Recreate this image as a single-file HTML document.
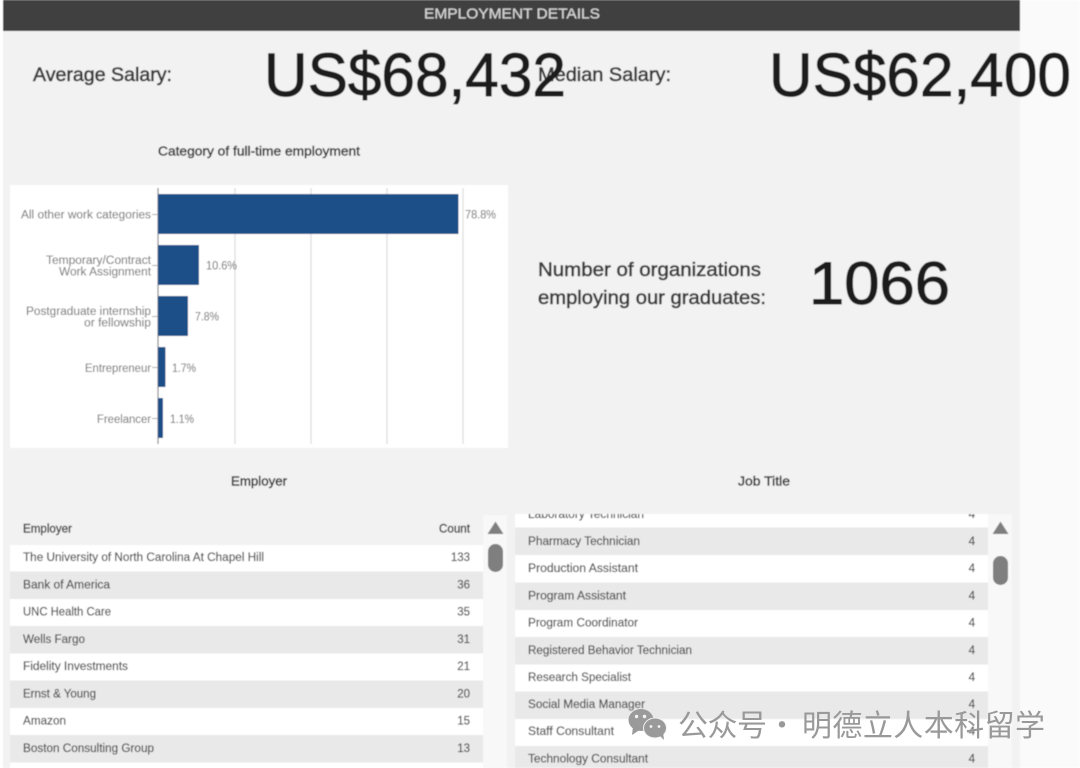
<!DOCTYPE html>
<html lang="en"><head><meta charset="utf-8"><title>Employment Details</title>
<style>
html,body{margin:0;padding:0;width:1080px;height:768px;overflow:hidden;background:#fff}
svg{display:block}
text{font-family:"Liberation Sans","Noto Sans CJK SC",sans-serif;white-space:pre}
.big{font-size:61px;fill:#1c1c1c;stroke:#1c1c1c;stroke-width:.9}
.h{font-size:19px;fill:#3c3c3c;stroke:#3c3c3c;stroke-width:.6}
.t{font-size:12.5px;fill:#3c3c3c;stroke:#3c3c3c;stroke-width:.45}
.l{font-size:11.5px;fill:#808080;stroke:#808080;stroke-width:.12}
.r{font-size:11.5px;fill:#505050;stroke:#505050;stroke-width:.2}
.c{font-size:11.5px;fill:#505050;stroke:#505050;stroke-width:.2;text-anchor:end}
.hd{font-size:11.5px;fill:#444;stroke:#444;stroke-width:.4}
.wm{font-family:"Noto Sans CJK SC","WenQuanYi Zen Hei",sans-serif;font-size:30px;fill:#999}
</style></head>
<body>
<svg width="1080" height="768" viewBox="0 0 1080 768" xmlns="http://www.w3.org/2000/svg">
<defs>
<filter id="b" x="0" y="0" width="100%" height="100%"><feGaussianBlur stdDeviation="0.6"/></filter>
<clipPath id="cl"><rect x="515" y="514" width="473" height="254"/></clipPath>
</defs>
<g filter="url(#b)">
<rect width="1080" height="768" fill="#fff"/>
<rect x="1020" y="0" width="60" height="768" fill="#fafafa"/>
<rect x="3" y="0" width="1017" height="768" fill="#f2f2f2"/>
<rect x="3" y="0" width="1017" height="31" fill="#404040"/>
<text x="424" y="18.5" font-size="15" fill="#d2d2d2" stroke="#d2d2d2" stroke-width=".25" textLength="176" lengthAdjust="spacingAndGlyphs">EMPLOYMENT DETAILS</text>

<text class="h" x="33" y="81" textLength="139" lengthAdjust="spacingAndGlyphs">Average Salary:</text>
<text class="h" x="538" y="81" textLength="133" lengthAdjust="spacingAndGlyphs">Median Salary:</text>
<text class="big" x="264" y="96" textLength="302" lengthAdjust="spacingAndGlyphs">US$68,432</text>
<text class="big" x="769" y="96" textLength="302" lengthAdjust="spacingAndGlyphs">US$62,400</text>

<text class="t" x="158" y="155.500" textLength="202" lengthAdjust="spacingAndGlyphs">Category of full-time employment</text>

<rect x="10" y="185" width="498" height="263" fill="#fff"/>
<g stroke="#e0e0e0" stroke-width="1.4">
<line x1="235" y1="188" x2="235" y2="444"/><line x1="311" y1="188" x2="311" y2="444"/><line x1="387" y1="188" x2="387" y2="444"/><line x1="463" y1="188" x2="463" y2="444"/>
</g>
<line x1="158" y1="188" x2="158" y2="444" stroke="#888" stroke-width="1.2"/>
<g stroke="#aaa"><line x1="152" y1="214.500" x2="158" y2="214.500"/><line x1="152" y1="265.500" x2="158" y2="265.500"/><line x1="152" y1="316.500" x2="158" y2="316.500"/><line x1="152" y1="367.500" x2="158" y2="367.500"/><line x1="152" y1="418.500" x2="158" y2="418.500"/></g>
<g fill="#1a4f88">
<rect x="158" y="194" width="300.500" height="40"/>
<rect x="158" y="245" width="41" height="40"/>
<rect x="158" y="296" width="30" height="40"/>
<rect x="158" y="347" width="7.500" height="40"/>
<rect x="158" y="398" width="5" height="40"/>
</g>
<text class="l" x="21" y="218.500" textLength="130" lengthAdjust="spacingAndGlyphs">All other work categories</text>
<text class="l" x="46" y="264" textLength="105" lengthAdjust="spacingAndGlyphs">Temporary/Contract</text>
<text class="l" x="59" y="275.500" textLength="92" lengthAdjust="spacingAndGlyphs">Work Assignment</text>
<text class="l" x="26" y="315" textLength="125" lengthAdjust="spacingAndGlyphs">Postgraduate internship</text>
<text class="l" x="84" y="326.500" textLength="67" lengthAdjust="spacingAndGlyphs">or fellowship</text>
<text class="l" x="85" y="372" textLength="66" lengthAdjust="spacingAndGlyphs">Entrepreneur</text>
<text class="l" x="97" y="423" textLength="54" lengthAdjust="spacingAndGlyphs">Freelancer</text>
<text class="l" x="465" y="218.500" textLength="31" lengthAdjust="spacingAndGlyphs">78.8%</text>
<text class="l" x="206" y="269.500" textLength="31" lengthAdjust="spacingAndGlyphs">10.6%</text>
<text class="l" x="195" y="320.500" textLength="24" lengthAdjust="spacingAndGlyphs">7.8%</text>
<text class="l" x="172" y="372" textLength="24" lengthAdjust="spacingAndGlyphs">1.7%</text>
<text class="l" x="170" y="423" textLength="24" lengthAdjust="spacingAndGlyphs">1.1%</text>

<text x="538" y="276" font-size="19.500" fill="#3c3c3c" stroke="#3c3c3c" stroke-width=".6" textLength="223" lengthAdjust="spacingAndGlyphs">Number of organizations</text>
<text x="538" y="304" font-size="19.500" fill="#3c3c3c" stroke="#3c3c3c" stroke-width=".6" textLength="228" lengthAdjust="spacingAndGlyphs">employing our graduates:</text>
<text x="809" y="304" font-size="60" fill="#1c1c1c" stroke="#1c1c1c" stroke-width="1" textLength="141" lengthAdjust="spacingAndGlyphs">1066</text>

<text class="t" x="231" y="485.500" textLength="56" lengthAdjust="spacingAndGlyphs">Employer</text>
<text class="t" x="738" y="485.500" textLength="52" lengthAdjust="spacingAndGlyphs">Job Title</text>

<!-- Employer table -->
<rect x="483" y="515" width="24" height="253" fill="#f8f8f8"/>
<path d="M495.500 521.500 L503.500 534 L487.500 534 Z" fill="#7f7f7f"/>
<rect x="488" y="544" width="15" height="28" rx="7.500" fill="#7f7f7f"/>
<rect x="10" y="545" width="473" height="223" fill="#fff"/>
<g fill="#e9e9e9">
<rect x="10" y="571.500" width="473" height="27.500"/>
<rect x="10" y="626" width="473" height="27.500"/>
<rect x="10" y="680.500" width="473" height="27.500"/>
<rect x="10" y="735" width="473" height="27.500"/>
</g>
<text class="hd" x="23" y="532.500" textLength="49" lengthAdjust="spacingAndGlyphs">Employer</text>
<text class="hd" x="439" y="532.500" textLength="31" lengthAdjust="spacingAndGlyphs">Count</text>
<text class="r" x="23" y="561" textLength="241" lengthAdjust="spacingAndGlyphs">The University of North Carolina At Chapel Hill</text>
<text class="r" x="23" y="588.500" textLength="87" lengthAdjust="spacingAndGlyphs">Bank of America</text>
<text class="r" x="23" y="615.500" textLength="88" lengthAdjust="spacingAndGlyphs">UNC Health Care</text>
<text class="r" x="23" y="643" textLength="62" lengthAdjust="spacingAndGlyphs">Wells Fargo</text>
<text class="r" x="23" y="670" textLength="105" lengthAdjust="spacingAndGlyphs">Fidelity Investments</text>
<text class="r" x="23" y="697.500" textLength="73" lengthAdjust="spacingAndGlyphs">Ernst &amp; Young</text>
<text class="r" x="23" y="724.500" textLength="43" lengthAdjust="spacingAndGlyphs">Amazon</text>
<text class="r" x="23" y="752" textLength="131" lengthAdjust="spacingAndGlyphs">Boston Consulting Group</text>
<text class="c" x="470" y="561">133</text>
<text class="c" x="470" y="588.500">36</text>
<text class="c" x="470" y="615.500">35</text>
<text class="c" x="470" y="643">31</text>
<text class="c" x="470" y="670">21</text>
<text class="c" x="470" y="697.500">20</text>
<text class="c" x="470" y="724.500">15</text>
<text class="c" x="470" y="752">13</text>

<!-- Job title table -->
<rect x="988" y="514" width="24" height="254" fill="#f8f8f8"/>
<path d="M1000.500 521.500 L1008.500 534 L992.500 534 Z" fill="#7f7f7f"/>
<rect x="993" y="556" width="15" height="29" rx="7.500" fill="#7f7f7f"/>
<rect x="515" y="514" width="473" height="254" fill="#fff"/>
<g fill="#e9e9e9">
<rect x="515" y="527.500" width="473" height="27.500"/>
<rect x="515" y="582.500" width="473" height="27.500"/>
<rect x="515" y="637" width="473" height="27.500"/>
<rect x="515" y="691.500" width="473" height="27.500"/>
<rect x="515" y="746" width="473" height="22"/>
</g>
<g clip-path="url(#cl)">
<text class="r" x="528" y="518" textLength="116" lengthAdjust="spacingAndGlyphs">Laboratory Technician</text>
<text class="c" x="975" y="518">4</text>
</g>
<text class="r" x="528" y="545" textLength="112" lengthAdjust="spacingAndGlyphs">Pharmacy Technician</text>
<text class="r" x="528" y="572" textLength="110" lengthAdjust="spacingAndGlyphs">Production Assistant</text>
<text class="r" x="528" y="599.500" textLength="98" lengthAdjust="spacingAndGlyphs">Program Assistant</text>
<text class="r" x="528" y="626.500" textLength="110" lengthAdjust="spacingAndGlyphs">Program Coordinator</text>
<text class="r" x="528" y="654" textLength="164" lengthAdjust="spacingAndGlyphs">Registered Behavior Technician</text>
<text class="r" x="528" y="681" textLength="103" lengthAdjust="spacingAndGlyphs">Research Specialist</text>
<text class="r" x="528" y="708" textLength="117" lengthAdjust="spacingAndGlyphs">Social Media Manager</text>
<text class="r" x="528" y="735" textLength="86" lengthAdjust="spacingAndGlyphs">Staff Consultant</text>
<text class="r" x="528" y="762.500" textLength="120" lengthAdjust="spacingAndGlyphs">Technology Consultant</text>
<text class="c" x="975" y="545">4</text>
<text class="c" x="975" y="572">4</text>
<text class="c" x="975" y="599.500">4</text>
<text class="c" x="975" y="626.500">4</text>
<text class="c" x="975" y="654">4</text>
<text class="c" x="975" y="681">4</text>
<text class="c" x="975" y="708">4</text>
<text class="c" x="975" y="735">4</text>
<text class="c" x="975" y="762.500">4</text>
</g>

<!-- Watermark -->
<g fill="#9a9a9a">
<ellipse cx="641" cy="720" rx="12.500" ry="11"/>
<path d="M633 727 L632 735 L641 729 Z"/>
</g>
<ellipse cx="655" cy="728" rx="12" ry="10.500" fill="#f2f2f2"/>
<g fill="#9a9a9a">
<ellipse cx="655" cy="728" rx="11" ry="9.500"/>
<path d="M659 735 L664 740 L663 732 Z"/>
</g>
<g fill="#f4f4f4">
<circle cx="636.500" cy="716.500" r="1.700"/><circle cx="644.500" cy="716.500" r="1.700"/>
<circle cx="651" cy="726.500" r="1.400"/><circle cx="659" cy="726.500" r="1.400"/>
</g>
<text class="wm" x="678" y="736" textLength="89" lengthAdjust="spacing">公众号</text>
<text class="wm" x="767" y="736">·</text>
<text class="wm" x="802" y="736" textLength="243" lengthAdjust="spacing">明德立人本科留学</text>
</svg>
</body></html>
